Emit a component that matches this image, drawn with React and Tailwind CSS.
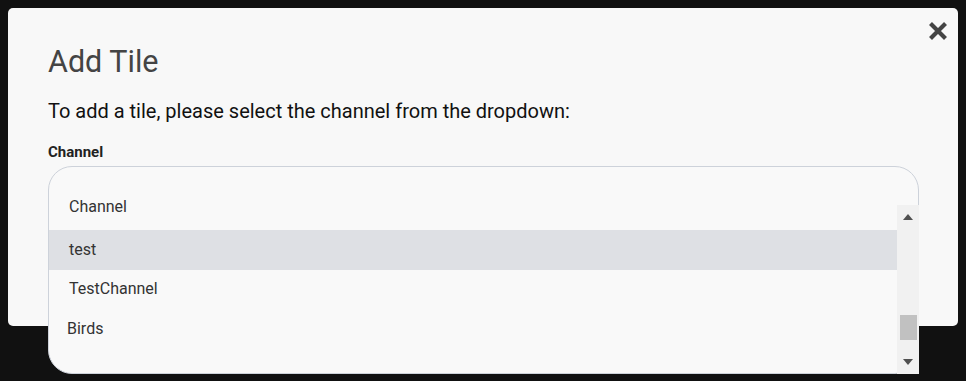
import React from "react";

const channels = ["test", "TestChannel", "Birds"];

export default function App() {
  return (
    <div className="min-h-[381px] w-full bg-[#111111] p-2 font-['Roboto',sans-serif]">
      <div className="relative h-[318px] rounded-[5px] bg-[#f8f8f8] px-10 pt-[36px]">
        {/* close */}
        <button className="absolute right-[6px] top-[9px] p-1 text-[#444]">
          <svg width="20" height="20" viewBox="0 0 20 20">
            <path d="M2.5 2.5 L17.5 17.5 M17.5 2.5 L2.5 17.5" stroke="currentColor" strokeWidth="4.2" />
          </svg>
        </button>

        <h2 className="text-[30.5px] leading-[36px] text-[#444]">Add Tile</h2>
        <p className="mt-[17px] text-[20px] leading-[28px] text-[#111]">
          To add a tile, please select the channel from the dropdown:
        </p>
        <label className="mt-[17px] block text-[15px] font-bold leading-[20px] text-[#222]">
          Channel
        </label>

        {/* dropdown list */}
        <div className="relative mt-[4px] h-[208px] w-[871px] rounded-[24px] border border-[#cdd2da] bg-[#f9f9f9] pt-[23px]">
          <div className="flex h-[40px] items-center px-5 pb-[6px] text-[16px] text-[#333]">Channel</div>
          <div className="flex h-[40px] w-[848px] items-center bg-[#dee0e4] px-[20px] pb-[1px] text-[16px] text-[#333]">
            {channels[0]}
          </div>
          <div className="flex h-[40px] items-center px-5 pb-[2px] text-[16px] text-[#333]">{channels[1]}</div>
          <div className="flex h-[40px] items-center px-[18px] pb-[2px] text-[16px] text-[#333]">{channels[2]}</div>

          {/* scrollbar */}
          <div className="absolute bottom-[-1px] right-[-1px] top-[38px] flex w-[22px] flex-col items-center bg-[#f1f1f1]">
            <svg className="mt-[9px]" width="10" height="6" viewBox="0 0 10 6">
              <path d="M0 6 L5 0 L10 6 Z" fill="#505050" />
            </svg>
            <div className="flex-1" />
            <div className="mb-[19px] h-[25px] w-[17px] bg-[#c1c1c1]" />
            <svg className="mb-[9px]" width="10" height="6" viewBox="0 0 10 6">
              <path d="M0 0 L5 6 L10 0 Z" fill="#505050" />
            </svg>
          </div>
        </div>
      </div>
    </div>
  );
}
